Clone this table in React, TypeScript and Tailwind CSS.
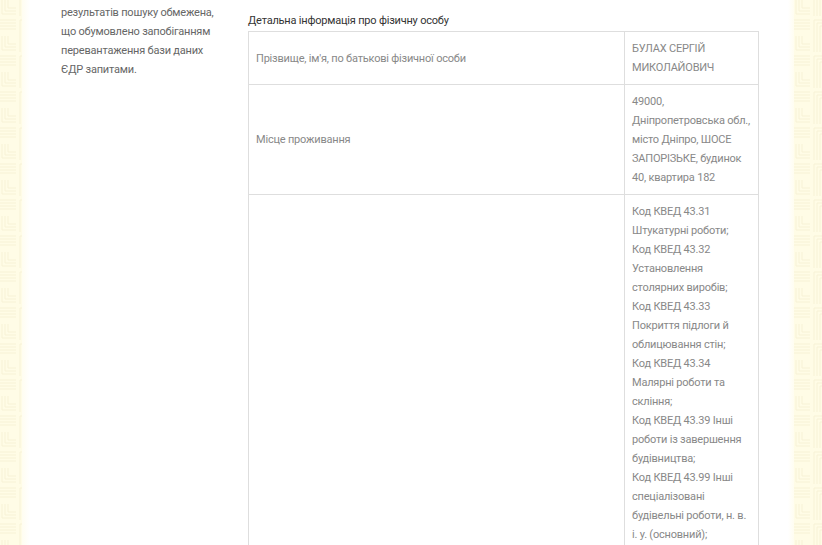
import React from 'react'

const font = { fontFamily: 'Roboto, "Liberation Sans", sans-serif' }

const Pattern = ({ id }: { id: string }) => (
    <svg className="absolute inset-0 h-full w-full" xmlns="http://www.w3.org/2000/svg">
        <defs>
            <pattern id={id} width="36" height="36" patternUnits="userSpaceOnUse">
                <rect width="36" height="36" fill="#fffce6" />
                <g fill="none" stroke="#f8f2d6" strokeWidth="1">
                    <path d="M2 0v14h14M5 0v11h11M8 0v8h8" />
                    <path d="M20 0v16M23 0v16M26 0v16M29 0v16" />
                    <path d="M0 20h16M0 23h16M0 26h16M0 29h16" />
                    <path d="M20 36V20h16M23 36V23h13M26 36V26h10" />
                </g>
            </pattern>
        </defs>
        <rect width="100%" height="100%" fill={`url(#${id})`} />
    </svg>
)

const kved = [
    'Код КВЕД 43.31',
    'Штукатурні роботи;',
    'Код КВЕД 43.32',
    'Установлення',
    'столярних виробів;',
    'Код КВЕД 43.33',
    'Покриття підлоги й',
    'облицювання стін;',
    'Код КВЕД 43.34',
    'Малярні роботи та',
    'скління;',
    'Код КВЕД 43.39 Інші',
    'роботи із завершення',
    'будівництва;',
    'Код КВЕД 43.99 Інші',
    'спеціалізовані',
    'будівельні роботи, н. в.',
    'і. у. (основний);',
    'Код КВЕД 41.20',
]

const Lines = ({ items }: { items: string[] }) => (
    <>
        {items.map((t, i) => (
            <div key={i} className="whitespace-nowrap">
                {t}
            </div>
        ))}
    </>
)

const cell = 'border border-[#dedede] px-[7px] py-[7px]'

export default function App() {
    return (
        <div
            className="flex h-[545px] w-full overflow-hidden bg-white text-[11px] leading-[19px] tracking-[-0.2px]"
            style={font}
        >
            <div className="relative w-[22px] shrink-0">
                <Pattern id="pl" />
            </div>
            <div className="w-[8px] shrink-0 bg-gradient-to-r from-[#fffdf0] to-white" />
            <div className="flex flex-1 min-w-0">
                <aside className="ml-[31px] w-[160px] shrink-0 pt-[3px] whitespace-nowrap text-[#666]">
                    <p>
                        результатів пошуку обмежена,
                        <br />
                        що обумовлено запобіганням
                        <br />
                        перевантаження бази даних
                        <br />
                        ЄДР запитами.
                    </p>
                </aside>
                <main className="ml-[27px] w-[511px] shrink-0 pt-[11px]">
                    <h3 className="mb-[1px] text-[#333]">Детальна інформація про фізичну особу</h3>
                    <table className="w-full table-fixed border-collapse border border-[#dedede] text-[#888]">
                        <colgroup>
                            <col className="w-[376px]" />
                            <col />
                        </colgroup>
                        <tbody>
                            <tr>
                                <td className={`${cell} align-middle`}>Прізвище, ім'я, по батькові фізичної особи</td>
                                <td className={`${cell} align-middle`}>
                                    <Lines items={['БУЛАХ СЕРГІЙ', 'МИКОЛАЙОВИЧ']} />
                                </td>
                            </tr>
                            <tr>
                                <td className={`${cell} align-middle`}>Місце проживання</td>
                                <td className={`${cell} align-middle`}>
                                    <Lines
                                        items={[
                                            '49000,',
                                            'Дніпропетровська обл.,',
                                            'місто Дніпро, ШОСЕ',
                                            'ЗАПОРІЗЬКЕ, будинок',
                                            '40, квартира 182',
                                        ]}
                                    />
                                </td>
                            </tr>
                            <tr>
                                <td className={cell} />
                                <td className={`${cell} align-top`}>
                                    <Lines items={kved} />
                                </td>
                            </tr>
                        </tbody>
                    </table>
                </main>
                <div className="flex-1" />
            </div>
            <div className="w-[6px] shrink-0 bg-gradient-to-r from-white to-[#fffdf0]" />
            <div className="relative w-[28px] shrink-0">
                <Pattern id="pr" />
            </div>
        </div>
    )
}
